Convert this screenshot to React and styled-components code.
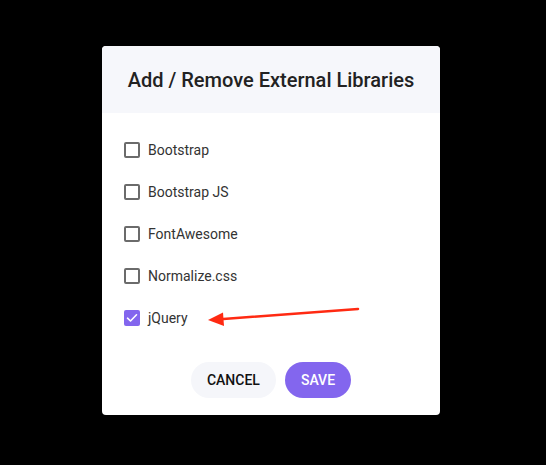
import React, { useState } from 'react';
import styled, { createGlobalStyle } from 'styled-components';

const GlobalStyle = createGlobalStyle`
  html, body {
    margin: 0;
    padding: 0;
    background: #000;
    font-family: Roboto, "Liberation Sans", sans-serif;
  }
`;

const Page = styled.div`
  width: 546px;
  height: 465px;
  box-sizing: border-box;
  padding: 46px 0 0 102px;
  background: #000;
`;

const Modal = styled.div`
  position: relative;
  width: 338px;
  height: 369px;
  background: #fff;
  border-radius: 4px;
  overflow: visible;
  display: flex;
  flex-direction: column;
`;

const Header = styled.div`
  height: 67px;
  background: #f6f7fb;
  border-radius: 4px 4px 0 0;
  display: flex;
  align-items: center;
  justify-content: center;
`;

const Title = styled.h2`
  margin: 0;
  font-size: 20px;
  font-weight: 500;
  color: #222;
  letter-spacing: 0;
`;

const List = styled.ul`
  list-style: none;
  margin: 0;
  padding: 16px 0 0 22px;
`;

const Row = styled.li`
  height: 42px;
  display: flex;
  align-items: center;
  gap: 8px;
  cursor: pointer;
`;

const Box = styled.span`
  width: 16px;
  height: 16px;
  box-sizing: border-box;
  border-radius: 2px;
  border: ${p => (p.$checked ? 'none' : '2px solid #6b6b6b')};
  background: ${p => (p.$checked ? '#8366ee' : '#fff')};
  display: flex;
  align-items: center;
  justify-content: center;
`;

const Label = styled.span`
  font-size: 14px;
  color: #333;
`;

const Actions = styled.div`
  display: flex;
  justify-content: center;
  gap: 9px;
  margin-top: 23px;
`;

const Btn = styled.button`
  height: 36px;
  padding: 0 16px;
  border: none;
  border-radius: 18px;
  font-family: inherit;
  font-size: 14px;
  font-weight: 500;
  background: ${p => (p.$primary ? '#8366ee' : '#f5f6fa')};
  color: ${p => (p.$primary ? '#fff' : '#111')};
  cursor: pointer;
`;

const Arrow = styled.svg`
  position: absolute;
  left: 100px;
  top: 255px;
  pointer-events: none;
`;

const libs = ['Bootstrap', 'Bootstrap JS', 'FontAwesome', 'Normalize.css', 'jQuery'];

export default function App() {
  const [checked, setChecked] = useState({ jQuery: true });

  const toggle = (name) => setChecked(c => ({ ...c, [name]: !c[name] }));

  return (
    <Page>
      <GlobalStyle />
      <Modal>
        <Header>
          <Title>Add / Remove External Libraries</Title>
        </Header>
        <List>
          {libs.map(name => (
            <Row key={name} onClick={() => toggle(name)}>
              <Box $checked={!!checked[name]}>
                {checked[name] && (
                  <svg width="12" height="10" viewBox="0 0 12 10">
                    <path d="M1.5 5.2 L4.5 8 L10.5 1.8" fill="none" stroke="#fff" strokeWidth="1.6" strokeLinecap="round" strokeLinejoin="round" />
                  </svg>
                )}
              </Box>
              <Label>{name}</Label>
            </Row>
          ))}
        </List>
        <Actions>
          <Btn>CANCEL</Btn>
          <Btn $primary>SAVE</Btn>
        </Actions>
        <Arrow width="170" height="30" viewBox="0 0 170 30">
          <line x1="256" y1="8" x2="118" y2="18.2" stroke="#ff2a12" strokeWidth="2.6" strokeLinecap="round" transform="translate(-100 0)" />
          <polygon points="6,19 21,11.5 22,25" fill="#ff2a12" />
        </Arrow>
      </Modal>
    </Page>
  );
}
